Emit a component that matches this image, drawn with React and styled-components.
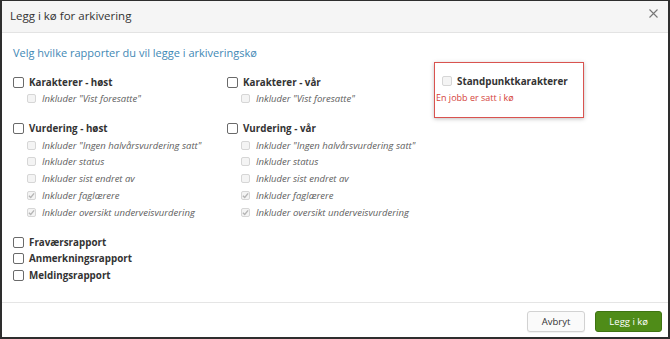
import React from 'react';
import styled, { createGlobalStyle } from 'styled-components';

const GlobalStyle = createGlobalStyle`
  html, body {
    margin: 0;
    padding: 0;
    background: #fff;
  }
  body {
    font-family: 'Open Sans', 'DejaVu Sans', sans-serif;
    color: #333;
  }
`;

const Frame = styled.div`
  box-sizing: border-box;
  width: 670px;
  height: 339px;
  border: 2px solid #2e2e2e;
  border-top-width: 1px;
  display: flex;
  flex-direction: column;
  background: #fff;
  overflow: hidden;
`;

const Header = styled.div`
  height: 31px;
  flex-shrink: 0;
  background: #f5f5f5;
  border-bottom: 1px solid #e3e3e3;
  display: flex;
  align-items: center;
  justify-content: space-between;
  padding: 0 10px 0 8px;
`;

const Title = styled.div`
  font-size: 11.5px;
  color: #333;
  margin-top: -3px;
`;

const Close = styled.div`
  width: 9px;
  height: 9px;
  display: flex;
  align-items: center;
  justify-content: center;
  margin-top: -7px;
`;

const Body = styled.div`
  flex: 1;
  padding: 12px 0 0 11px;
`;

const Lead = styled.div`
  font-size: 11px;
  color: #3f88b5;
  margin-bottom: 13px;
  line-height: 16px;
`;

const Columns = styled.div`
  display: grid;
  grid-template-columns: 214px 206px 151px;
  align-items: start;
`;

const Column = styled.div`
  display: flex;
  flex-direction: column;
`;

const Group = styled.div`
  display: flex;
  flex-direction: column;
  margin-bottom: ${p => p.$gap}px;
`;

const Row = styled.label`
  display: flex;
  align-items: center;
  height: ${p => (p.$sub ? 16.8 : 16.5)}px;
  padding-left: ${p => (p.$sub ? 14 : 0)}px;
  font-size: ${p => (p.$sub ? 9.5 : 9.8)}px;
  font-weight: ${p => (p.$sub ? 400 : 700)};
  font-style: ${p => (p.$sub ? 'italic' : 'normal')};
  color: ${p => (p.$sub ? '#606060' : '#333')};
  white-space: nowrap;
`;

const Box = styled.span`
  box-sizing: border-box;
  width: ${p => (p.$sub ? 9 : 11)}px;
  height: ${p => (p.$sub ? 9 : 11)}px;
  margin-right: ${p => (p.$sub ? 6 : 5)}px;
  border: 1px solid ${p => (p.$sub ? '#d6d6d6' : '#6a6a6a')};
  border-radius: 2px;
  background: ${p => (p.$sub ? '#f4f4f4' : '#fff')};
  display: flex;
  align-items: center;
  justify-content: center;
  flex-shrink: 0;
`;

const Notice = styled.div`
  box-sizing: border-box;
  width: 150px;
  height: 56px;
  margin-top: -12px;
  margin-left: 1px;
  border: 1px solid #d9534f;
  box-shadow: 0 1px 4px rgba(0, 0, 0, 0.25);
  padding: 10px 0 0 1px;
  display: flex;
  flex-direction: column;
`;

const NoticeRow = styled(Row)`
  padding-left: 6px;
  & > span {
    width: 10px;
    height: 10px;
    margin-right: 5px;
  }
`;

const Warning = styled.div`
  font-size: 9px;
  color: #d43f3a;
  line-height: 16px;
`;

const Footer = styled.div`
  height: 31px;
  flex-shrink: 0;
  border-top: 1px solid #e5e5e5;
  display: flex;
  align-items: center;
  justify-content: flex-end;
  gap: 10px;
  padding: 3px 6px 0 0;
`;

const Button = styled.button`
  box-sizing: border-box;
  height: 21px;
  padding: 0 ${p => (p.$primary ? 13 : 14)}px;
  font-family: 'Open Sans', 'DejaVu Sans', sans-serif;
  font-size: 9.5px;
  border-radius: 3px;
  border: 1px solid ${p => (p.$primary ? '#3f7412' : '#d2d2d2')};
  background: ${p => (p.$primary ? '#4f8c18' : '#fafafa')};
  color: ${p => (p.$primary ? '#fff' : '#333')};
  box-shadow: ${p => (p.$primary ? 'none' : '0 1px 1px rgba(0,0,0,0.06)')};
`;

function Check({ sub, checked }) {
  return (
    <Box $sub={sub}>
      {checked && (
        <svg width="7" height="7" viewBox="0 0 8 8">
          <path d="M1 4.2 L3.1 6.2 L7 1.6" fill="none" stroke="#b5b5b5" strokeWidth="1.6" />
        </svg>
      )}
    </Box>
  );
}

function Item({ label, sub, checked }) {
  return (
    <Row $sub={sub}>
      <Check sub={sub} checked={checked} />
      {label}
    </Row>
  );
}

const vurderingSubs = [
  ['Inkluder "Ingen halvårsvurdering satt"', false],
  ['Inkluder status', false],
  ['Inkluder sist endret av', false],
  ['Inkluder faglærere', true],
  ['Inkluder oversikt underveisvurdering', true],
];

function SeasonColumn({ season, children }) {
  return (
    <Column>
      <Group $gap={13}>
        <Item label={`Karakterer - ${season}`} />
        <Item sub label='Inkluder "Vist foresatte"' />
      </Group>
      <Group $gap={13}>
        <Item label={`Vurdering - ${season}`} />
        {vurderingSubs.map(([l, c]) => (
          <Item key={l} sub label={l} checked={c} />
        ))}
      </Group>
      {children}
    </Column>
  );
}

export default function App() {
  return (
    <>
      <GlobalStyle />
      <Frame>
        <Header>
          <Title>Legg i kø for arkivering</Title>
          <Close>
            <svg width="9" height="9" viewBox="0 0 9 9">
              <path d="M0.5 0.5 L8.5 8.5 M8.5 0.5 L0.5 8.5" stroke="#777" strokeWidth="1.1" />
            </svg>
          </Close>
        </Header>
        <Body>
          <Lead>Velg hvilke rapporter du vil legge i arkiveringskø</Lead>
          <Columns>
            <SeasonColumn season="høst">
              <Group $gap={0}>
                <Item label="Fraværsrapport" />
                <Item label="Anmerkningsrapport" />
                <Item label="Meldingsrapport" />
              </Group>
            </SeasonColumn>
            <SeasonColumn season="vår" />
            <Notice>
              <NoticeRow>
                <Check sub />
                Standpunktkarakterer
              </NoticeRow>
              <Warning>En jobb er satt i kø</Warning>
            </Notice>
          </Columns>
        </Body>
        <Footer>
          <Button>Avbryt</Button>
          <Button $primary>Legg i kø</Button>
        </Footer>
      </Frame>
    </>
  );
}
